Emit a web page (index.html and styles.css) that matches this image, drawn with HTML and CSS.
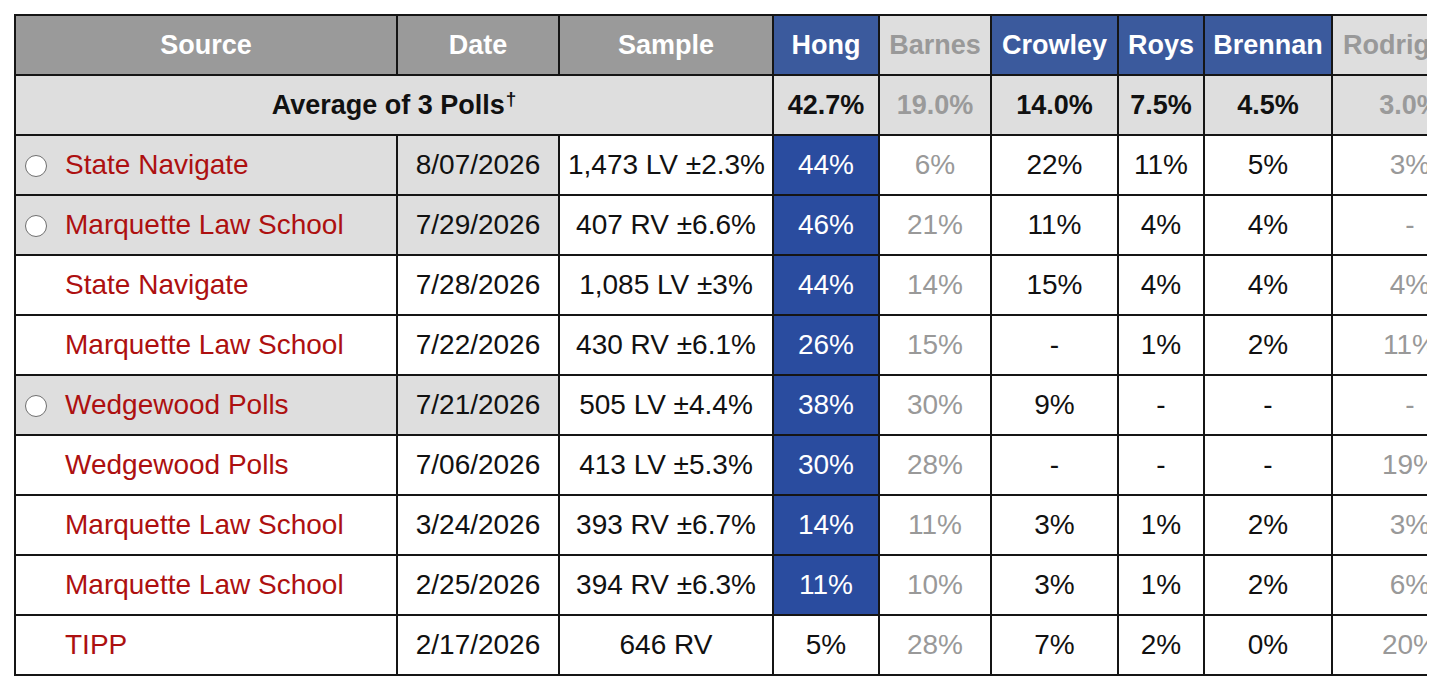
FILE: index.html
```html
<!DOCTYPE html>
<html>
<head>
<meta charset="utf-8">
<link rel="stylesheet" href="styles.css">
</head>
<body>
<div class="wrap">
<table class="polls">
  <thead>
    <tr>
      <th class="c-src">Source</th>
      <th class="c-date">Date</th>
      <th class="c-sample">Sample</th>
      <th class="c-hong cand-dem">Hong</th>
      <th class="c-barnes cand-off">Barnes</th>
      <th class="c-crowley cand-dem">Crowley</th>
      <th class="c-roys cand-dem">Roys</th>
      <th class="c-brennan cand-dem">Brennan</th>
      <th class="c-rod cand-off">Rodriguez</th>
    </tr>
  </thead>
  <tbody>
    <tr class="avg">
      <td colspan="3">Average of 3 Polls<sup>†</sup></td>
      <td>42.7%</td>
      <td class="muted">19.0%</td>
      <td>14.0%</td>
      <td>7.5%</td>
      <td>4.5%</td>
      <td class="muted">3.0%</td>
    </tr>
    <tr class="sel">
      <td class="src"><span class="radio"></span><span class="name">State Navigate</span></td>
      <td class="date">8/07/2026</td>
      <td class="sample">1,473 LV ±2.3%</td>
      <td class="lead">44%</td>
      <td class="muted">6%</td>
      <td>22%</td>
      <td>11%</td>
      <td>5%</td>
      <td class="muted">3%</td>
    </tr>
    <tr class="sel">
      <td class="src"><span class="radio"></span><span class="name">Marquette Law School</span></td>
      <td class="date">7/29/2026</td>
      <td class="sample">407 RV ±6.6%</td>
      <td class="lead">46%</td>
      <td class="muted">21%</td>
      <td>11%</td>
      <td>4%</td>
      <td>4%</td>
      <td class="muted">-</td>
    </tr>
    <tr>
      <td class="src"><span class="noradio"></span><span class="name">State Navigate</span></td>
      <td class="date">7/28/2026</td>
      <td class="sample">1,085 LV ±3%</td>
      <td class="lead">44%</td>
      <td class="muted">14%</td>
      <td>15%</td>
      <td>4%</td>
      <td>4%</td>
      <td class="muted">4%</td>
    </tr>
    <tr>
      <td class="src"><span class="noradio"></span><span class="name">Marquette Law School</span></td>
      <td class="date">7/22/2026</td>
      <td class="sample">430 RV ±6.1%</td>
      <td class="lead">26%</td>
      <td class="muted">15%</td>
      <td>-</td>
      <td>1%</td>
      <td>2%</td>
      <td class="muted">11%</td>
    </tr>
    <tr class="sel">
      <td class="src"><span class="radio"></span><span class="name">Wedgewood Polls</span></td>
      <td class="date">7/21/2026</td>
      <td class="sample">505 LV ±4.4%</td>
      <td class="lead">38%</td>
      <td class="muted">30%</td>
      <td>9%</td>
      <td>-</td>
      <td>-</td>
      <td class="muted">-</td>
    </tr>
    <tr>
      <td class="src"><span class="noradio"></span><span class="name">Wedgewood Polls</span></td>
      <td class="date">7/06/2026</td>
      <td class="sample">413 LV ±5.3%</td>
      <td class="lead">30%</td>
      <td class="muted">28%</td>
      <td>-</td>
      <td>-</td>
      <td>-</td>
      <td class="muted">19%</td>
    </tr>
    <tr>
      <td class="src"><span class="noradio"></span><span class="name">Marquette Law School</span></td>
      <td class="date">3/24/2026</td>
      <td class="sample">393 RV ±6.7%</td>
      <td class="lead">14%</td>
      <td class="muted">11%</td>
      <td>3%</td>
      <td>1%</td>
      <td>2%</td>
      <td class="muted">3%</td>
    </tr>
    <tr>
      <td class="src"><span class="noradio"></span><span class="name">Marquette Law School</span></td>
      <td class="date">2/25/2026</td>
      <td class="sample">394 RV ±6.3%</td>
      <td class="lead">11%</td>
      <td class="muted">10%</td>
      <td>3%</td>
      <td>1%</td>
      <td>2%</td>
      <td class="muted">6%</td>
    </tr>
    <tr>
      <td class="src"><span class="noradio"></span><span class="name">TIPP</span></td>
      <td class="date">2/17/2026</td>
      <td class="sample">646 RV</td>
      <td>5%</td>
      <td class="muted">28%</td>
      <td>7%</td>
      <td>2%</td>
      <td>0%</td>
      <td class="muted">20%</td>
    </tr>
  </tbody>
</table>
</div>
</body>
</html>
```

FILE: styles.css
```css
html, body {
  margin: 0;
  padding: 0;
  background: #ffffff;
}

body {
  font-family: "Liberation Sans", Arial, Helvetica, sans-serif;
  color: #111111;
}

.wrap {
  margin: 14px 0 0 14px;
  width: 1413px;
  overflow: hidden;
}

.polls {
  border-collapse: separate;
  border-spacing: 0;
  table-layout: fixed;
  width: 1475px;
  border-top: 2px solid #151515;
  border-left: 2px solid #151515;
}

.polls th,
.polls td {
  box-sizing: border-box;
  height: 60px;
  padding: 0 8px;
  border-right: 2px solid #151515;
  border-bottom: 2px solid #151515;
  text-align: center;
  vertical-align: middle;
  white-space: nowrap;
  overflow: hidden;
  font-size: 28px;
  line-height: 1;
}

.polls th {
  background: #9a9a9a;
  color: #ffffff;
  font-weight: bold;
  font-size: 27px;
}

.c-src { width: 382px; }
.c-date { width: 162px; }
.c-sample { width: 214px; }
.c-hong { width: 106px; }
.c-barnes { width: 112px; }
.c-crowley { width: 127px; }
.c-roys { width: 86px; }
.c-brennan { width: 128px; }
.c-rod { width: 156px; }

.polls th.cand-dem {
  background: #3b5a9d;
  color: #ffffff;
}

.polls th.cand-off {
  background: #dedede;
  color: #999999;
}

.polls th.c-rod {
  text-align: left;
  padding-left: 10px;
}

.polls .avg td {
  background: #dedede;
  font-weight: bold;
  font-size: 27px;
  color: #111111;
}

.polls .avg td.muted {
  color: #9a9a9a;
}

.avg sup {
  font-size: 19px;
  vertical-align: 9px;
  line-height: 0;
  margin-left: 1px;
}

.polls td.muted {
  color: #999999;
}

.polls td.src {
  text-align: left;
  padding-left: 9px;
}

.src .radio,
.src .noradio {
  display: inline-block;
  box-sizing: border-box;
  width: 22px;
  height: 22px;
  margin-right: 18px;
  vertical-align: -3px;
}

.src .radio {
  border: 1.5px solid #6f6f6f;
  border-radius: 50%;
  background: #ffffff;
}

.src .name {
  color: #ad1010;
}

.sel .src,
.sel .date {
  background: #dedede;
}

.polls td.lead {
  background: #2a4c9f;
  color: #ffffff;
}
```
